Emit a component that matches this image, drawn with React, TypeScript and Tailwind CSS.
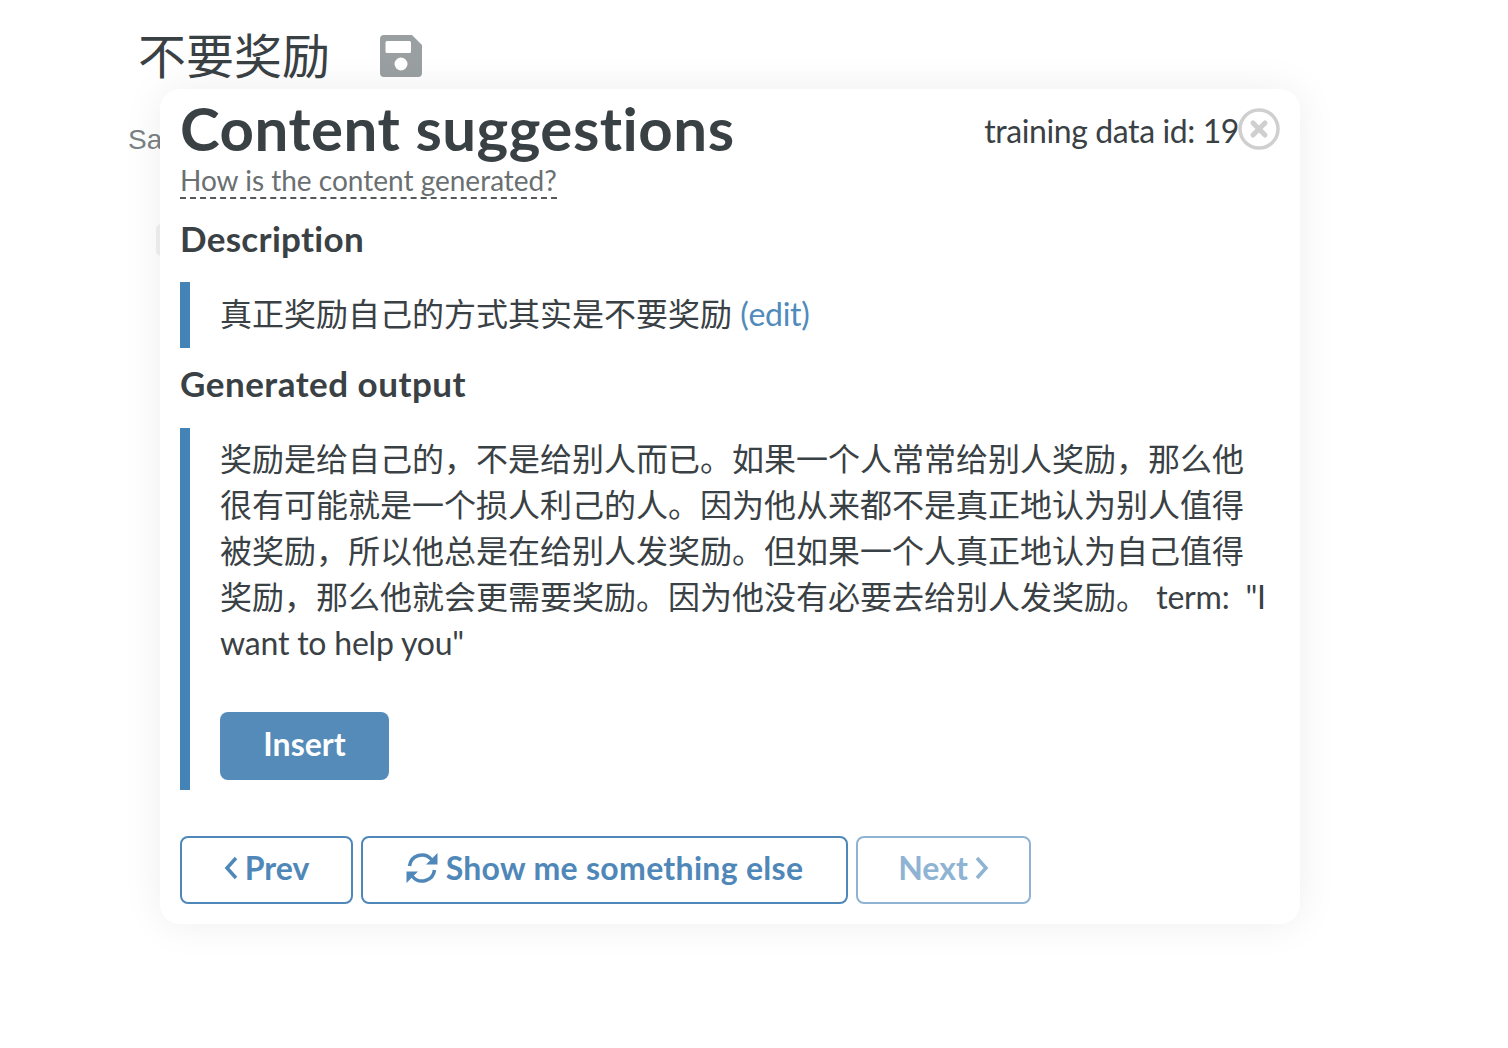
import React from "react";

function SaveIcon() {
  return (
    <svg width="42" height="42" viewBox="0 0 42 42" className="block">
      <path
        fillRule="evenodd"
        fill="#9a9fa1"
        d="M4 0H32L42 10V38A4 4 0 0 1 38 42H4A4 4 0 0 1 0 38V4A4 4 0 0 1 4 0ZM7 6A1.5 1.5 0 0 0 5.500 7.500V16.500A1.500 1.500 0 0 0 7 18H29.500A1.500 1.500 0 0 0 31 16.500V7.500A1.500 1.500 0 0 0 29.500 6ZM21 22.500A6.500 6.500 0 1 0 21 35.500A6.500 6.500 0 1 0 21 22.500Z"
      />
    </svg>
  );
}

function CloseIcon() {
  return (
    <svg width="42" height="42" viewBox="0 0 42 42" className="block">
      <circle cx="21" cy="21" r="19" fill="none" stroke="#cfcfcf" strokeWidth="3.500" />
      <path d="M15 15L27 27M27 15L15 27" stroke="#cfcfcf" strokeWidth="5" strokeLinecap="round" />
    </svg>
  );
}

function Refresh() {
  return (
    <svg width="32" height="32" viewBox="0 0 32 32" className="block">
      <path d="M3.500 14A12.500 12.500 0 0 1 25.500 7.500" fill="none" stroke="currentColor" strokeWidth="3.500" />
      <path d="M31.500 1V12.500H20Z" fill="currentColor" />
      <path d="M28.500 18A12.500 12.500 0 0 1 6.500 24.500" fill="none" stroke="currentColor" strokeWidth="3.500" />
      <path d="M0.500 31V19.500H12Z" fill="currentColor" />
    </svg>
  );
}

function Chevron({ dir }: { dir: "l" | "r" }) {
  return (
    <svg width="14" height="24" viewBox="0 0 14 24" className="block">
      <path
        d={dir === "l" ? "M12 2L3 12L12 22" : "M2 2L11 12L2 22"}
        fill="none"
        stroke="currentColor"
        strokeWidth="3.500"
      />
    </svg>
  );
}

export default function App() {
  return (
    <div className="relative h-[1048px] w-[1508px] overflow-hidden bg-white font-['Lato','Noto_Sans_CJK_SC',sans-serif] text-[#3a4145] [font-variant-ligatures:none]">
      <div className="pl-[138px] pt-[30px]">
        <div className="flex h-[46px] items-center gap-[50px]">
          <span className="text-[48px] leading-[46px] font-['Noto_Sans_CJK_SC',sans-serif] font-normal">不要奖励</span>
          <div className="mt-[6px]"><SaveIcon /></div>
        </div>
        <div className="-ml-[10px] mt-[47px] font-['Liberation_Sans',sans-serif] text-[28px] leading-[34px] text-[#7a8285]">Sa</div>
      </div>
      <div className="absolute left-[156px] top-[224px] h-[32px] w-[10px] rounded-[6px] bg-[#f1f1f1]" />

      <div className="absolute left-[160px] top-[89px] h-[835px] w-[1140px] rounded-[20px] bg-white px-[20px] shadow-[0_0_40px_rgba(0,0,0,0.07)]">
        <div className="flex items-start justify-between">
          <div>
            <h1 className="mt-[4px] text-[60px] leading-[70px] font-bold tracking-[0.5px]">Content suggestions</h1>
            <a className="block w-[377px] border-b-2 border-dashed border-[#55595c] text-[28px] leading-[34px] text-[#6a6f72]">
              How is the content generated?
            </a>
          </div>
          <div className="mt-[19px] flex items-start">
            <span className="mt-[4px] text-[32px] leading-[38px] tracking-[-0.4px]">training data id: 19</span>
            <div className="-ml-[1px]"><CloseIcon /></div>
          </div>
        </div>

        <h2 className="mt-[17px] text-[35px] leading-[44px] font-bold tracking-[0.3px]">Description</h2>
        <div className="mt-[22px] flex h-[66px] items-center border-l-[10px] border-[#4483b6] pl-[30px] text-[32px] leading-[46px]">
          <span className="-mt-[2px]">
            真正奖励自己的方式其实是不要奖励 <span className="tracking-[-0.3px] text-[#4f8bbb]">(edit)</span>
          </span>
        </div>

        <h2 className="mt-[13px] text-[35px] leading-[44px] font-bold tracking-[0.5px]">Generated output</h2>
        <div className="mt-[23px] h-[362px] border-l-[10px] border-[#4483b6] pl-[30px] pt-[8px]">
          <p className="w-[1050px] text-[32px] leading-[46px]">
            奖励是给自己的，不是给别人而已。如果一个人常常给别人奖励，那么他很有可能就是一个损人利己的人。因为他从来都不是真正地认为别人值得被奖励，所以他总是在给别人发奖励。但如果一个人真正地认为自己值得奖励，那么他就会更需要奖励。因为他没有必要去给别人发奖励。 <span className="tracking-[-0.2px]">term: &nbsp;"I want to help you"</span>
          </p>
          <button className="mt-[46px] flex h-[68px] w-[169px] items-center justify-center rounded-[8px] bg-[#548bb9] pb-[4px] text-[32px] font-bold text-white">
            Insert
          </button>
        </div>

        <div className="mt-[46px] flex gap-[8px] text-[32px] font-bold text-[#4f88b8]">
          <button className="flex h-[68px] w-[173px] items-center justify-center gap-[7px] rounded-[8px] border-2 border-[#4f88b8] pb-[4px]">
            <Chevron dir="l" />
            Prev
          </button>
          <button className="flex h-[68px] w-[487px] items-center justify-center gap-[8px] rounded-[8px] border-2 border-[#4f88b8] pb-[4px] tracking-[0.3px]">
            <Refresh />
            Show me something else
          </button>
          <button className="flex h-[68px] w-[175px] items-center justify-center gap-[7px] rounded-[8px] border-2 border-[#8fb4d3] pb-[4px] text-[#8fb4d3]">
            Next
            <Chevron dir="r" />
          </button>
        </div>
      </div>
    </div>
  );
}
